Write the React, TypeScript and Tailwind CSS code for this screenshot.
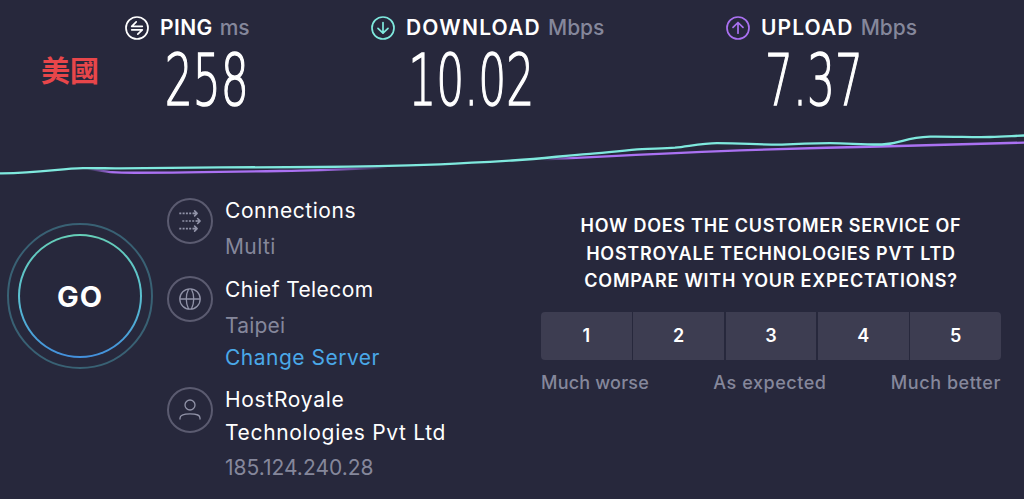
import React from 'react';

interface MetricProps {
  label: string;
  unit: string;
  value: string;
  icon: React.ReactNode;
  className: string;
  labelClass: string;
  valueClass: string;
}

const Metric: React.FC<MetricProps> = ({ label, unit, value, icon, className, labelClass, valueClass }) => (
  <div className={`shrink-0 ${className}`}>
    <div className="flex items-center h-6 text-[21px] leading-6 whitespace-nowrap">
      {icon}
      <span className={`ml-[11px] font-semibold ${labelClass}`}>{label}</span>
      <span className="ml-[7px] font-medium text-[#85879b]">{unit}</span>
    </div>
    <div className={`h-[76px] mt-[2px] text-[71px] leading-[77px] font-extralight origin-left scale-x-[0.62] whitespace-nowrap [-webkit-text-stroke:1.5px_white] font-['DejaVu_Sans',sans-serif] ${valueClass}`}>
      {value}
    </div>
  </div>
);

const PingIcon = () => (
  <svg className="w-6 h-6 shrink-0" viewBox="0 0 24 24" fill="none" stroke="#fff" strokeWidth="1.7" strokeLinecap="round" strokeLinejoin="round">
    <circle cx="12" cy="12" r="11" />
    <path d="M11.200 5.900 6.700 10.300h10.600M12.800 18.200l4.500-4.400H6.700" />
  </svg>
);

const DownloadIcon = () => (
  <svg className="w-6 h-6 shrink-0" viewBox="0 0 24 24" fill="none" stroke="#7fe9de" strokeWidth="1.7" strokeLinecap="round" strokeLinejoin="round">
    <circle cx="12" cy="12" r="11" />
    <path d="M12 6.500v10.700M7 12.400l5 4.800 5-4.800" />
  </svg>
);

const UploadIcon = () => (
  <svg className="w-6 h-6 shrink-0" viewBox="0 0 24 24" fill="none" stroke="#aa71f2" strokeWidth="1.7" strokeLinecap="round" strokeLinejoin="round">
    <circle cx="12" cy="12" r="11" />
    <path d="M12 17.200V6.500M7 11.300l5-4.800 5 4.800" />
  </svg>
);

const ConnectionsIcon = () => (
  <svg className="w-6 h-6" viewBox="0 0 24 24" fill="none" stroke="#9193a8" strokeWidth="1.6">
    <path strokeDasharray="2 1.300" d="M1.300 4.400H16M4.300 12H19M1.300 19.600H16" />
    <path strokeLinejoin="round" strokeLinecap="round" d="M16 4.400h3M19 12h3M16 19.600h3M16.600 1.900l2.500 2.500-2.500 2.500M19.600 9.500 22.100 12l-2.500 2.500M16.600 17.100l2.500 2.500-2.500 2.500" />
  </svg>
);

const GlobeIcon = () => (
  <svg className="w-6 h-6" viewBox="0 0 24 24" fill="none" stroke="#9193a8" strokeWidth="1.3">
    <circle cx="12" cy="12" r="10.200" />
    <path d="M1.800 12h20.400M10.600 2C7.500 8 7.500 16 10.600 22M13.400 2c3.100 6 3.100 14 0 20" />
  </svg>
);

const UserIcon = () => (
  <svg className="w-6 h-6" viewBox="0 0 24 24" fill="none" stroke="#9193a8" strokeWidth="1.3" strokeLinecap="round">
    <circle cx="12" cy="7" r="5" />
    <path d="M2 21v-1c0-2.600 2.500-4.200 10-4.200s10 1.600 10 4.200v1" />
  </svg>
);

const IconRing: React.FC<{ children: React.ReactNode }> = ({ children }) => (
  <div className="w-[46px] h-[46px] shrink-0 rounded-full border-2 border-[#5b5b70] flex items-center justify-center">
    {children}
  </div>
);

const SpeedChart = () => (
  <svg className="block w-full h-[60px]" viewBox="0 124 1024 60" fill="none" strokeWidth="2.300">
    <defs>
      <linearGradient id="upload" gradientUnits="userSpaceOnUse" x1="0" y1="0" x2="1024" y2="0">
        <stop offset="0.085" stopColor="#aa71f2" stopOpacity="0" />
        <stop offset="0.11" stopColor="#aa71f2" />
        <stop offset="0.31" stopColor="#aa71f2" />
        <stop offset="0.38" stopColor="#aa71f2" stopOpacity="0" />
        <stop offset="0.53" stopColor="#aa71f2" stopOpacity="0" />
        <stop offset="0.56" stopColor="#aa71f2" />
      </linearGradient>
    </defs>
    <path stroke="url(#upload)" d="M83 168.300C98 169 102 172.700 122 172.700C180 173 240 171.700 300 170.600C360 169 390 167 440 165C500 162 530 160.500 560 158.700C620 155.500 680 152.500 740 150.300C800 148.500 830 147.500 880 146.500C930 145 980 143.500 1024 142.600" />
    <path stroke="#7fe9de" d="M0 173.300C40 173.500 60 168.400 83 168.100C100 168 110 168.500 120 168.300C190 167.500 250 167.200 320 167C370 166.300 400 165.500 440 164.300C470 163 490 161.800 512 160.500C550 158.500 560 155.500 590 153.800C610 152.300 625 150.300 642 149.100C655 148.500 665 148.600 675 147.700C690 146 703 143.200 717 143.100C745 143.100 755 144.700 782 144.600C800 143.500 815 143.200 830 143.100C850 143.300 862 144.700 882 144.500C903 143.500 904 137.300 930 136.700C955 136.500 975 137.500 990 137C1005 136.700 1015 135.700 1024 135.500" />
  </svg>
);

const GoButton = () => (
  <button className="w-[146px] h-[146px] rounded-full border-2 border-[#396174] flex items-center justify-center">
    <span className="w-[124px] h-[124px] rounded-full p-[2px] bg-linear-to-b from-[#66cfb8] via-[#5bc0d0] to-[#438fdc] flex">
      <span className="flex-1 rounded-full bg-[#27283c] flex items-center justify-center pt-[2px] text-[29px] font-bold tracking-[1px] text-white">
        GO
      </span>
    </span>
  </button>
);

const App: React.FC = () => {
  const ratings = [1, 2, 3, 4, 5];

  return (
    <div className="w-[1024px] h-[499px] overflow-hidden bg-[#27283c] text-white font-['Inter',sans-serif]">
      <div className="flex h-[124px] pt-4">
        <div className="w-[125px] shrink-0 pl-[41px] pt-8 text-[29px] leading-[42px] font-bold text-[#e8464a] font-['Noto_Sans_CJK_TC',sans-serif]">
          美國
        </div>
        <Metric className="w-[246px]" label="PING" unit="ms" value="258" icon={<PingIcon />} labelClass="tracking-[0.4px]" valueClass="pl-[64px]" />
        <Metric className="w-[355px]" label="DOWNLOAD" unit="Mbps" value="10.02" icon={<DownloadIcon />} labelClass="tracking-[1.2px]" valueClass="pl-[60px]" />
        <Metric className="w-[298px]" label="UPLOAD" unit="Mbps" value="7.37" icon={<UploadIcon />} labelClass="tracking-[1.1px]" valueClass="pl-[63px]" />
      </div>

      <SpeedChart />

      <div className="flex">
        <div className="w-[167px] shrink-0 pl-[7px] pt-[39px]">
          <GoButton />
        </div>

        <div className="w-[374px] shrink-0 pt-[11px] text-[21px] leading-8 whitespace-nowrap">
          <div className="flex h-[78px]">
            <div className="pt-[3px]"><IconRing><ConnectionsIcon /></IconRing></div>
            <div className="ml-3">
              <p className="tracking-[0.55px]">Connections</p>
              <p className="mt-1 text-[#85879b] tracking-[0.4px]">Multi</p>
            </div>
          </div>
          <div className="flex h-[111px]">
            <div className="pt-[3px]"><IconRing><GlobeIcon /></IconRing></div>
            <div className="ml-3 pt-[1px]">
              <p className="tracking-[0.4px]">Chief Telecom</p>
              <p className="mt-1 text-[#85879b] tracking-[0.2px]">Taipei</p>
              <p className="text-[#4aa8e8] tracking-[0.5px]">Change Server</p>
            </div>
          </div>
          <div className="flex">
            <div className="pt-[3px]"><IconRing><UserIcon /></IconRing></div>
            <div className="ml-3">
              <p className="tracking-[0.7px]">HostRoyale</p>
              <p className="pt-[1px] tracking-[0.67px]">Technologies Pvt Ltd</p>
              <p className="mt-[3px] text-[#85879b]">185.124.240.28</p>
            </div>
          </div>
        </div>

        <div className="w-[460px] shrink-0 pt-[28px]">
          <h2 className="text-center text-[18px] leading-[27.500px] font-semibold tracking-[0.75px] whitespace-nowrap">
            HOW DOES THE CUSTOMER SERVICE OF<br />
            HOSTROYALE TECHNOLOGIES PVT LTD<br />
            COMPARE WITH YOUR EXPECTATIONS?
          </h2>
          <div className="mt-[17px] grid grid-cols-5 gap-[1.500px] h-12 rounded overflow-hidden">
            {ratings.map(n => (
              <button key={n} className="bg-[#3d3d51] text-[18px] font-semibold">
                {n}
              </button>
            ))}
          </div>
          <div className="mt-[10px] flex justify-between text-[18px] leading-[26px] font-medium text-[#85879b]">
            <span className="tracking-[0.2px]">Much worse</span>
            <span className="tracking-[0.55px]">As expected</span>
            <span className="tracking-[0.55px]">Much better</span>
          </div>
        </div>
      </div>
    </div>
  );
};

export default App;
